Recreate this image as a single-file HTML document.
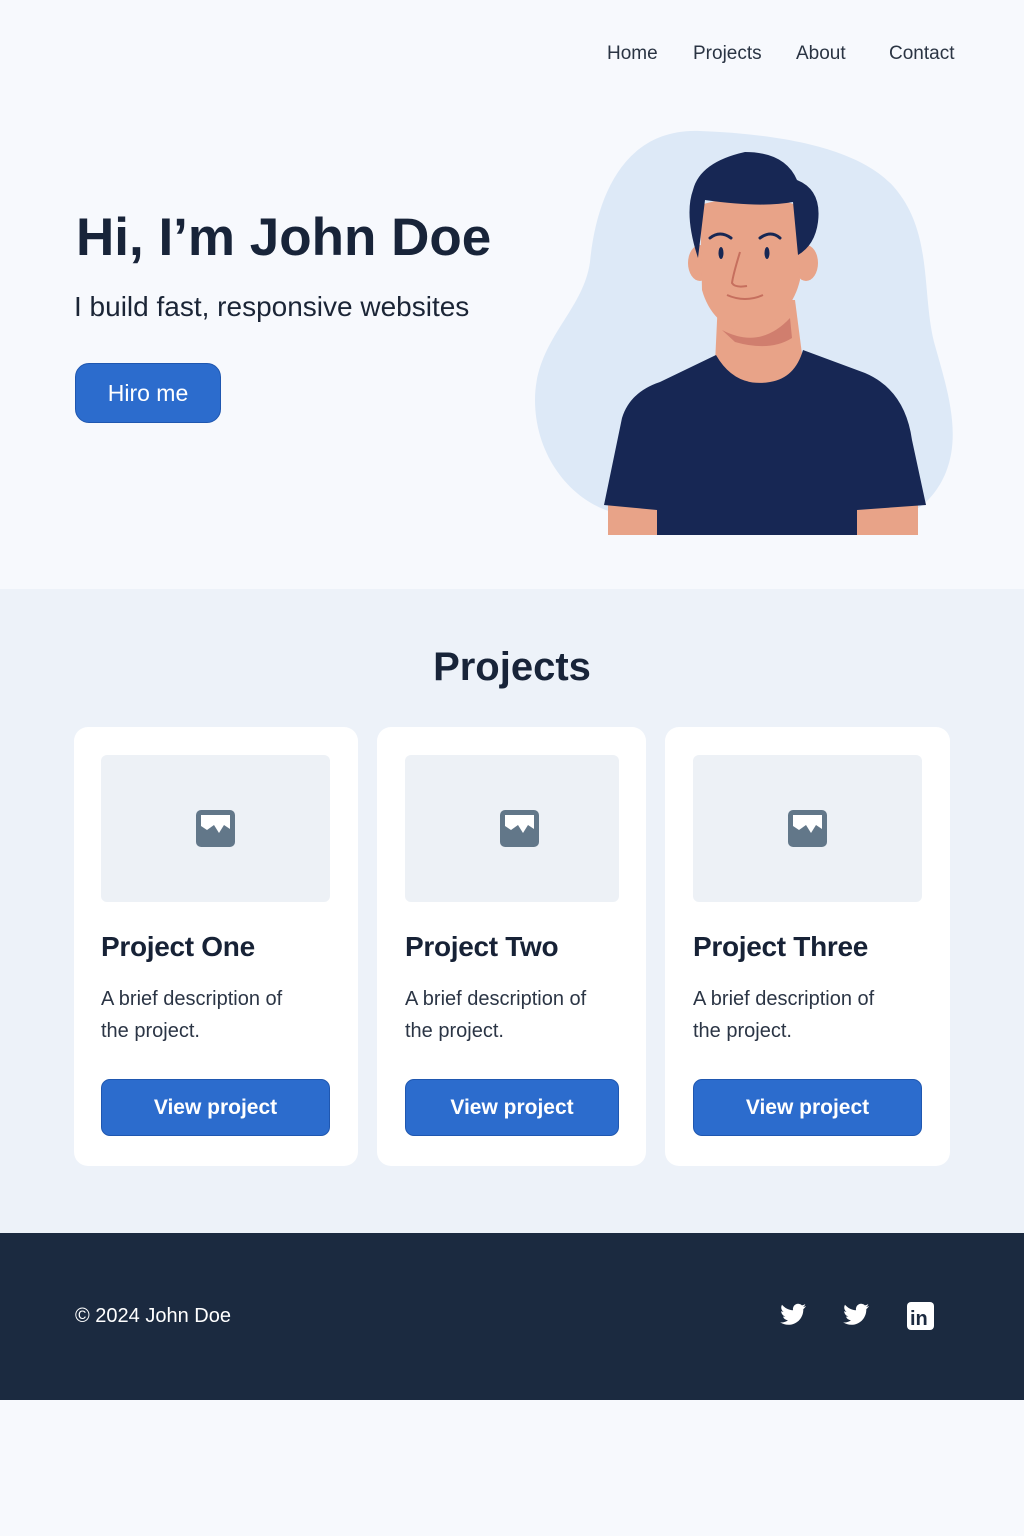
<!DOCTYPE html>
<html><head><meta charset="utf-8"><style>
*{margin:0;padding:0;box-sizing:border-box}
body{width:1024px;height:1536px;background:#f7f9fd;font-family:"Liberation Sans",sans-serif;position:relative;overflow:hidden;color:#1b2a3f}
.a{position:absolute;white-space:nowrap}
.nav{top:43px;font-size:19px;color:#2a3443}
.sec{position:absolute;left:0;top:589px;width:1024px;height:644px;background:#edf2f9}
.card{position:absolute;top:727px;height:439px;background:#fff;border-radius:14px}
.ph{position:absolute;left:27px;top:28px;height:147px;background:#edf1f6;border-radius:6px}
.ct{position:absolute;left:27px;top:204px;font-size:28px;color:#172236;font-weight:bold;letter-spacing:-0.3px}
.cd{position:absolute;left:27px;top:256px;font-size:20px;line-height:32px;color:#2b3545}
.cb{position:absolute;left:27px;top:352px;height:57px;background:#2c6ccd;border:1px solid #1f57b0;border-radius:9px;color:#fff;font-size:21px;font-weight:bold;text-align:center;line-height:55px}
.foot{position:absolute;left:0;top:1233px;width:1024px;height:167px;background:#1b2a40}
</style></head><body>
<div class="a nav" style="left:607px">Home</div>
<div class="a nav" style="left:693px">Projects</div>
<div class="a nav" style="left:796px">About</div>
<div class="a nav" style="left:889px">Contact</div>

<div class="a" style="left:76px;top:207px;font-size:53px;font-weight:bold;color:#182439">Hi, I’m John Doe</div>
<div class="a" style="left:74px;top:291px;font-size:28px;color:#1b2536">I build fast, responsive websites</div>
<div class="a" style="left:75px;top:363px;width:146px;height:60px;background:#2c6ccd;border:1px solid #1f57b0;border-radius:14px;color:#fff;font-size:23px;text-align:center;line-height:58px">Hiro me</div>

<svg class="a" style="left:0;top:0" width="1024" height="589" viewBox="0 0 1024 589">
<path d="M700 131C780 134 865 148 898 192C932 236 922 292 934 342C946 385 962 432 946 472C938 492 925 505 912 512L612 512C570 500 535 455 535 400C535 340 583 312 590 262C596 200 622 128 700 131Z" fill="#dde9f7"/>
<path d="M608 505L657 505L657 535L608 535Z M857 505L918 505L918 535L857 535Z" fill="#e8a388"/>
<path d="M718 300L714 385L806 385L795 300Z" fill="#e8a388"/>
<path d="M722 330Q760 350 790 318L792 338Q770 352 735 342Z" fill="#d07e6e"/>
<path d="M716 355Q735 388 770 382Q795 378 803 350L865 373Q905 390 912 440L926 505L857 510L857 535L657 535L657 510L604 505L622 418Q630 392 660 382Z" fill="#172754"/>
<ellipse cx="700" cy="263" rx="12" ry="18" fill="#e8a388"/>
<ellipse cx="806" cy="263" rx="12" ry="18" fill="#e8a388"/>
<path d="M700 205Q750 190 797 205L800 280Q790 322 745 333Q712 325 702 290Z" fill="#e8a388"/>
<path d="M698 258Q684 215 693 190Q700 162 745 152Q785 152 797 180Q822 190 818 222Q815 245 798 255L793 202Q760 208 705 200Z" fill="#172754"/>
<path d="M710 238Q720 230 731 238M760 238Q771 230 780 238" stroke="#172754" stroke-width="3" fill="none" stroke-linecap="round"/>
<ellipse cx="721" cy="253" rx="2.5" ry="6" fill="#172754"/>
<ellipse cx="767" cy="253" rx="2.5" ry="6" fill="#172754"/>
<path d="M740 252Q733 275 732 283Q735 288 747 286" stroke="#c66f5e" stroke-width="2" fill="none"/>
<path d="M727 295Q745 303 763 295" stroke="#c66f5e" stroke-width="2" fill="none"/>
</svg>

<div class="sec"></div>
<div class="a" style="left:0;width:1024px;text-align:center;top:645px;font-size:40px;font-weight:bold;color:#182439">Projects</div>

<div class="card" style="left:74px;width:284px"><div class="ph" style="width:229px"></div><div class="ct">Project One</div><div class="cd">A brief description of<br>the project.</div><div class="cb" style="width:229px">View project</div></div>
<div class="card" style="left:377px;width:269px"><div class="ph" style="left:28px;width:214px"></div><div class="ct" style="left:28px">Project Two</div><div class="cd" style="left:28px">A brief description of<br>the project.</div><div class="cb" style="left:28px;width:214px">View project</div></div>
<div class="card" style="left:665px;width:285px"><div class="ph" style="left:28px;width:229px"></div><div class="ct" style="left:28px">Project Three</div><div class="cd" style="left:28px">A brief description of<br>the project.</div><div class="cb" style="left:28px;width:229px">View project</div></div>

<svg class="a" style="left:0;top:0" width="1024" height="900">
<g id="ic"><rect x="196" y="810" width="39" height="37" rx="5" fill="#627789"/><path d="M201 815H230V829L224 825L219 833L214 825L207 830L201 826Z" fill="#fff"/></g>
<use href="#ic" x="304"/><use href="#ic" x="592"/>
</svg>

<div class="foot"></div>
<div class="a" style="left:75px;top:1305px;font-size:20px;color:#fff">© 2024 John Doe</div>
<svg class="a" style="left:0;top:1290px" width="1024" height="60" viewBox="0 1290 1024 60">
<g id="tw" fill="#fff"><path d="M809 1306c-1 .5-2 .8-3 .9 1-.7 2-1.6 2.3-2.8-1 .6-2.2 1-3.3 1.3a5.3 5.3 0 0 0-9 4.8c-4.4-.2-8.3-2.3-11-5.5-1.5 2.5-.7 5.6 1.6 7.1-.9 0-1.700-.3-2.4-.7 0 2.6 1.8 4.8 4.2 5.3-.8.2-1.600.3-2.4.1.7 2.1 2.7 3.6 5 3.7-2.2 1.7-5 2.5-7.8 2.2 2.4 1.5 5.2 2.4 8.1 2.4 9.800 0 15.3-8.3 15-15.7 1-.7 1.9-1.7 2.6-2.8z" transform="translate(-3,0)"/></g>
<use href="#tw" x="63"/>
<rect x="907" y="1302" width="27" height="28" rx="4" fill="#fff"/>
<text x="910" y="1325" font-family="Liberation Sans" font-weight="bold" font-size="20" fill="#1b2a40">in</text>
</svg>
</body></html>
